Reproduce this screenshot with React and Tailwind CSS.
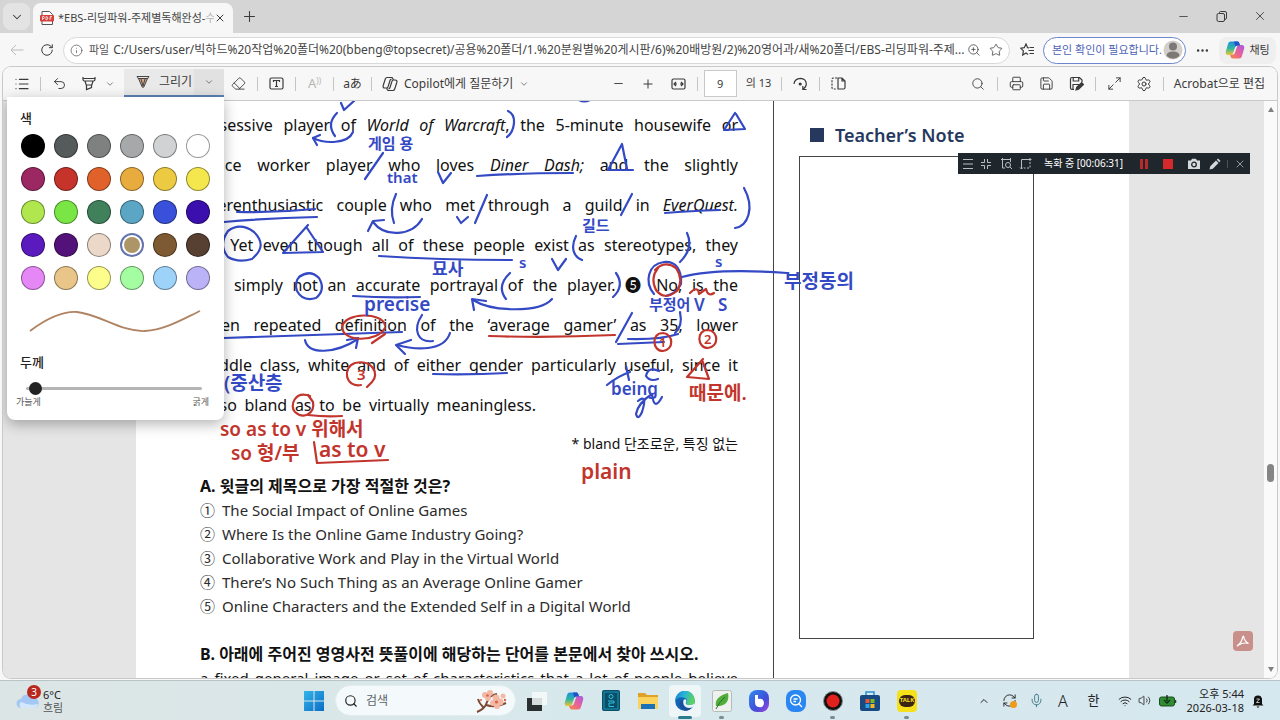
import { useState } from 'react';
import {
  ChevronDown, ChevronUp, Eraser, Info, List, Maximize2, Mic, Minus, MoreHorizontal, Plus, Printer,
  RefreshCw, RotateCw, Save, Search, Settings, Star, Undo2, Volume2, Wifi, X, ZoomIn,
} from 'lucide-react';

const colors = [
  ['검정', 'bg-[#000000]'], ['진한 회색', 'bg-[#555a5a]'], ['회색', 'bg-[#7f8181]'],
  ['중간 회색', 'bg-[#a6a8a9]'], ['연한 회색', 'bg-[#d0d2d3]'], ['흰색', 'bg-[#ffffff]'],
  ['자홍', 'bg-[#9b2763]'], ['빨강', 'bg-[#c5332a]'], ['주황', 'bg-[#e0622a]'],
  ['귤색', 'bg-[#e8ab3d]'], ['금색', 'bg-[#eccb43]'], ['노랑', 'bg-[#f4e64d]'],
  ['라임', 'bg-[#b0e64e]'], ['연두', 'bg-[#79e646]'], ['초록', 'bg-[#40805a]'],
  ['청록', 'bg-[#5ba6c4]'], ['파랑', 'bg-[#3850da]'], ['남색', 'bg-[#3b0fae]'],
  ['보라', 'bg-[#5a1abd]'], ['진보라', 'bg-[#531279]'], ['살구', 'bg-[#ecd8c8]'],
  ['황갈색', 'bg-[#ad9568]'], ['갈색', 'bg-[#7e5a32]'], ['진갈색', 'bg-[#573f32]'],
  ['분홍', 'bg-[#e687f6]'], ['복숭아', 'bg-[#eac589]'], ['연노랑', 'bg-[#fdfd8b]'],
  ['민트', 'bg-[#a5fda2]'], ['하늘', 'bg-[#9dd2f9]'], ['라벤더', 'bg-[#bbb3f7]'],
];

const passage = [
  <>obsessive player of <i>World of Warcraft</i>, the 5-minute housewife or</>,
  <>office worker player who loves <i>Diner Dash;</i> and the slightly</>,
  <>overenthusiastic couple who met through a guild in <i>EverQuest.</i></>,
  <>❹ Yet even though all of these people exist as stereotypes, they</>,
  <>are simply not an accurate portrayal of the player. ❺ No, is the</>,
  <>often repeated definition of the ‘average gamer’ as 35, lower</>,
  <>middle class, white and of either gender particularly useful, since it</>,
];

const choices = [
  ['①', 'The Social Impact of Online Games'],
  ['②', 'Where Is the Online Game Industry Going?'],
  ['③', 'Collaborative Work and Play in the Virtual World'],
  ['④', 'There’s No Such Thing as an Average Online Gamer'],
  ['⑤', 'Online Characters and the Extended Self in a Digital World'],
];

const blueInk = [
  'M341 103 L344 110 L354 101', 'M579 100 Q584 103 590 100',
  'M337 113 Q326 124 335 136', 'M353 132 C348 144 325 144 313 138', 'M320 135 L313 138 L317 145',
  'M383 153 L365 179', 'M438 172 L443 183 L451 173', 'M477 176 Q520 173 573 173',
  'M237 212 Q275 213 315 209', 'M224 222 Q270 218 317 217',
  'M396 194 Q389 209 394 223', 'M422 219 C412 236 385 238 373 222', 'M368 231 L373 221 L384 220',
  'M457 217 L461 223 L468 217', 'M487 195 L475 223',
  'M252 259 Q238 263 228 257 Q218 245 228 231 Q240 222 254 232 C264 242 262 250 253 258',
  'M308 225 L283 253 L323 252 L307 228', 'M379 256 Q440 260 512 260',
  'M299 277 Q310 269 319 278 Q326 290 316 298 Q303 302 297 291 Q294 282 300 276',
  'M353 296 Q385 298 420 297',
  'M508 111 C518 116 514 132 507 137', 'M735 113 L724 130 L745 129 L736 114',
  'M622 144 L608 170 L633 170 M622 144 L627 169', 'M632 194 L621 215', 'M665 213 Q690 211 720 210',
  'M744 188 C755 208 748 226 735 228', 'M576 236 C570 248 574 257 582 260', 'M687 233 Q694 248 680 262',
  'M552 259 L558 270 L566 259', 'M654 294 C644 282 648 264 664 262 C676 261 682 270 681 284 Q676 294 666 296',
  'M682 277 Q716 268 787 273', 'M510 273 Q496 286 506 299', 'M616 273 Q625 286 613 297',
  'M552 299 C540 313 492 312 473 300', 'M474 310 L472 299 L486 301',
  'M224 338 Q310 335 402 332', 'M305 340 C308 355 335 354 358 339', 'M347 340 L358 338 L356 348',
  'M422 315 C412 330 418 343 433 341', 'M450 333 C444 352 415 350 397 345', 'M411 340 L396 345 L405 354',
  'M632 313 L616 342', 'M628 339 Q660 340 678 334', 'M618 344 L664 342', 'M680 312 Q683 326 675 333',
  'M433 374 Q470 375 507 373', 'M626 366 L629 380 M607 385 Q618 376 630 372',
  'M659 371 Q648 366 646 376 Q650 382 658 379', 'M638 401 Q648 393 642 412 Q638 421 636 414 Q638 403 652 394 Q654 412 662 397',
];

const redInk = [
  'M655 270 Q665 260 676 268 Q684 280 677 291 Q664 301 656 290 Q650 278 658 268',
  'M690 293 Q698 285 699 294 L706 289 Q708 297 714 293',
  'M385 325 C382 312 345 312 342 327 C343 343 378 342 385 328 M372 343 L385 334',
  'M489 336 Q550 338 615 335', 'M361 385 C345 388 342 367 355 363 C372 359 380 374 372 382 L367 387',
  'M663 333 C651 333 652 351 663 351 C674 350 674 334 663 333',
  'M708 330 C696 330 697 348 708 348 C719 347 719 331 708 330',
  'M310 396 C295 390 289 406 295 412 C304 420 315 413 313 402 L308 395', 'M308 415 Q325 417 342 416',
  'M703 359 L687 377 L709 379 L702 360', 'M314 442 L317 463 L388 460',
];

const blueNotes = [
  [368, 149, 'text-[15px]', '게임 용'], [387, 183, 'text-[15px]', 'that'], [582, 231, 'text-[15px]', '길드'],
  [432, 275, 'text-[17px]', '묘사'], [519, 268, 'text-[15px]', 's'], [715, 267, 'text-[15px]', 's'],
  [784, 288, 'text-[19px]', '부정동의'], [364, 311, 'text-[19px]', 'precise'], [649, 310, 'text-[15px]', '부정어'],
  [694, 311, 'text-[17px]', 'V'], [718, 311, 'text-[17px]', 'S'], [224, 390, 'text-[19px]', '(중산층'],
  [611, 395, 'text-[17px]', 'being'],
];

const redNotes = [
  [220, 436, 'text-[19px]', 'so as to v 위해서'], [231, 460, 'text-[19px]', 'so 형/부'],
  [319, 457, 'text-[21px]', 'as to v'], [581, 479, 'text-[21px]', 'plain'], [689, 400, 'text-[19px]', '때문에.'],
  [659, 347, 'text-[13px]', '1'], [704, 344, 'text-[13px]', '2'], [357, 380, 'text-[15px]', '3'],
];

function Tool({ label, children }) {
  return (
    <button type="button" aria-label={label} className="flex h-7 w-[25px] shrink-0 items-center justify-center">
      {children}
    </button>
  );
}

function Divider() {
  return <span className="mx-1.5 h-3.5 w-px shrink-0 bg-[#c4c4c4]" />;
}

function CopilotLogo({ id }) {
  return (
    <svg viewBox="0 0 20 20" className="size-5 shrink-0">
      <defs>
        <linearGradient id={`${id}-a`} x1="0" y1="0" x2="0" y2="1">
          <stop offset="0" stopColor="#1f8fe0" /><stop offset=".5" stopColor="#2fb6a0" /><stop offset="1" stopColor="#f3c52f" />
        </linearGradient>
        <linearGradient id={`${id}-b`} x1="1" y1="0" x2="0" y2="1">
          <stop offset="0" stopColor="#a55be8" /><stop offset=".5" stopColor="#e9609a" /><stop offset="1" stopColor="#f58a3c" />
        </linearGradient>
      </defs>
      <path d="M6 1.5h6.2c1.2 0 1.8.7 2.1 1.7l.7 2.3h-2.4c-1.4 0-2.2.8-2.6 2.1L8 13.3c-.4 1.2-1.2 1.8-2.4 1.8H3.2C1 15.1.3 13.3.9 11.2L3 4C3.5 2.3 4.4 1.5 6 1.5z" fill={`url(#${id}-a)`} />
      <path d="M14 18.5H7.8c-1.2 0-1.8-.7-2.1-1.7L5 14.7h2.4c1.4 0 2.2-.8 2.6-2.1L12 6.7c.4-1.2 1.2-1.8 2.4-1.8h2.4c2.2 0 2.9 1.8 2.3 3.9L17 16c-.5 1.7-1.4 2.5-3 2.5z" fill={`url(#${id}-b)`} />
      <path d="M9 1.5h3.2c1.2 0 1.8.7 2.1 1.7l.7 2.3h-2.4c-1 0-1.7.4-2.2 1.2z" fill="#2450c8" />
    </svg>
  );
}

function TitleBar() {
  return (
    <header className="flex h-[33px] shrink-0 items-end bg-[#d5d5d5] pl-[3px]">
      <button type="button" aria-label="탭 작업 메뉴" className="mb-[3px] flex h-[27px] w-[27px] items-center justify-center rounded-lg bg-[#e3e3e3]">
        <ChevronDown size={14} strokeWidth={1.8} />
      </button>
      <div className="ml-[3px] flex h-[30px] w-[200px] items-center rounded-t-lg bg-[#f7f7f7] px-[7px]">
        <svg viewBox="0 0 14 14" className="size-3.5 shrink-0">
          <path d="M2 .5h7.5L12.5 3.5v10H2z" fill="#fff" stroke="#555" />
          <rect x="0" y="4" width="14" height="6.5" rx="1" fill="#d6403b" />
          <path d="M2.5 9V5.5H4q.8 1 0 2H2.5M6 5.5V9q3-.5 1.5-3L6 5.5M10 9V5.5h2M10 7h1.6" fill="none" stroke="#fff" strokeWidth=".7" />
        </svg>
        <span className="ml-1 w-[156px] shrink-0 overflow-hidden text-[11px] whitespace-nowrap text-[#444]">
          *EBS-리딩파워-주제별독해완성-<span className="text-[#b5b5b5]">수</span>
        </span>
        <button type="button" aria-label="탭 닫기" className="ml-auto"><X size={12} strokeWidth={2} /></button>
      </div>
      <button type="button" aria-label="새 탭" className="mb-2 ml-2"><Plus size={17} strokeWidth={1.5} /></button>
      <div className="mb-2.5 ml-auto flex items-center gap-[25px] pr-[13px]">
        <button type="button" aria-label="최소화"><Minus size={13} strokeWidth={1.5} /></button>
        <button type="button" aria-label="이전 크기로">
          <svg viewBox="0 0 13 13" className="size-[13px] fill-none stroke-current">
            <rect x="2" y="3.5" width="7.5" height="8" rx="1.5" /><path d="M4.5 3.5v-1q0-1 1-1H10q1.5 0 1.5 1.5v5q0 1-1.5 1.5" />
          </svg>
        </button>
        <button type="button" aria-label="닫기"><X size={14} strokeWidth={1.5} /></button>
      </div>
    </header>
  );
}

function AddressBar() {
  return (
    <div className="flex h-[34px] shrink-0 items-center bg-[#f7f7f7] pr-1 pl-2">
      <button type="button" aria-label="뒤로" className="flex w-[18px] justify-center text-[#bcbcbc]">
        <svg viewBox="0 0 14 12" className="w-3.5 fill-none stroke-current"><path d="M13.5 6H1M6 1L1 6l5 5" /></svg>
      </button>
      <button type="button" aria-label="새로 고침" className="ml-3 flex w-[18px] justify-center">
        <RotateCw size={14} strokeWidth={1.7} />
      </button>
      <div className="ml-[7px] flex h-[27px] min-w-0 flex-1 items-center rounded-full border border-[#d8d8d8] bg-white px-[6px]">
        <Info size={13} strokeWidth={1.5} className="shrink-0 text-[#666]" />
        <label htmlFor="url" className="ml-1.5 shrink-0 text-[11px] text-[#555]">파일</label>
        <input
          id="url" type="text" readOnly
          value="C:/Users/user/빅하드%20작업%20폴더%20(bbeng@topsecret)/공용%20폴더/1.%20분원별%20게시판/6)%20배방원/2)%20영어과/새%20폴더/EBS-리딩파워-주제..."
          className="ml-1 min-w-0 flex-1 bg-transparent text-[12px] text-[#444] outline-none"
        />
        <button type="button" aria-label="확대/축소" className="shrink-0"><ZoomIn size={14} strokeWidth={1.3} /></button>
        <button type="button" aria-label="즐겨찾기에 추가" className="ml-2 shrink-0"><Star size={14} strokeWidth={1.3} /></button>
      </div>
      <button type="button" aria-label="즐겨찾기" className="ml-2.5 shrink-0">
        <svg viewBox="0 0 15 14" className="w-[15px] fill-none stroke-current stroke-[1.2]">
          <path d="M9 5L7.6 4.7 6 1 4.3 4.7.7 5.2l2.7 2.7L2.7 12 6 10l2 1.5M9.5 4.5H14M8.5 7.5H14M9.5 10.5H14" />
        </svg>
      </button>
      <button type="button" className="ml-2 flex h-[27px] w-[143px] shrink-0 items-center justify-between rounded-full border border-[#6b86cc] bg-white pr-0.5 pl-2 text-[11px] whitespace-nowrap text-[#4b62b5]">
        본인 확인이 필요합니다.
        <svg viewBox="0 0 20 20" className="size-5 shrink-0">
          <circle cx="10" cy="10" r="9.5" fill="#d4cfcb" /><circle cx="10" cy="6.5" r="4" fill="#7c7876" /><path d="M3.5 16q0-4.5 6.5-4.5t6.5 4.5q-6.5 5.5-13 0" fill="#7c7876" />
        </svg>
      </button>
      <button type="button" aria-label="설정 및 기타" className="mx-[9px] shrink-0"><MoreHorizontal size={15} strokeWidth={2} /></button>
      <button type="button" className="flex h-[27px] w-[57px] shrink-0 items-center justify-center gap-1 rounded-lg bg-[#efefef] text-[11px] whitespace-nowrap">
        <CopilotLogo id="chat" />채팅
      </button>
    </div>
  );
}

function SavePenIcon() {
  return (
    <svg viewBox="0 0 15 15" className="w-[15px] fill-none stroke-current stroke-[1.2]">
      <path d="M5 13.3H3Q1.5 13.3 1.5 12V3Q1.5 1.5 3 1.5h7.5L13 4v2M4.2 1.5V5h5.5V1.5M4 13V8.5h6" />
      <path d="M7 14l.7-2.7 5-4.6 1.7 1.7-4.8 4.9z" fill="currentColor" />
    </svg>
  );
}

function ViewerToolbar() {
  return (
    <div className="flex h-[34px] shrink-0 items-center border-b border-[#c9c9c9] bg-[#f7f7f7] pr-3 pl-1.5">
      <Tool label="목차"><List size={16} strokeWidth={1.7} /></Tool>
      <Divider />
      <Tool label="실행 취소"><Undo2 size={15} strokeWidth={1.5} /></Tool>
      <div className="mr-[5px] ml-1 flex items-center">
        <Tool label="강조 표시">
          <svg viewBox="0 0 14 15" className="w-3.5 fill-none stroke-current stroke-[1.2]">
            <path d="M1 1v2.5q0 1.5 1.5 1.5h9Q13 5 13 3.5V1M3 5l1.2 4h5.6L11 5M4.5 9v4.5l5-2V9M1 2.5h12" />
          </svg>
        </Tool>
        <button type="button" aria-label="강조 색" className="w-[18px] pl-1"><ChevronDown size={10} strokeWidth={1.5} /></button>
      </div>
      <div className="mt-0.5 flex h-7 w-[100px] shrink-0 items-center self-start border-b-2 border-[#5b80b5] bg-[#e9e9e9] text-[12px] whitespace-nowrap">
        <button type="button" className="flex h-full flex-1 items-center gap-[9px] pl-3">
          <svg viewBox="0 0 14 14" className="w-3.5">
            <path d="M2.5 3.5h9L7.8 12q-.8 1-1.6 0z" fill="#d8a587" stroke="#444" />
            <path d="M1 1.5h12M1 1l1.5 3M13 1l-1.5 3M5 4l2 7 2-7" fill="none" stroke="#444" />
          </svg>
          그리기
        </button>
        <button type="button" aria-label="그리기 속성" className="flex h-full w-[30px] items-center justify-center bg-[#e1e1e1]"><ChevronDown size={10} strokeWidth={1.5} /></button>
      </div>
      <div className="ml-0.5 flex items-center">
        <Tool label="지우개"><Eraser size={15} strokeWidth={1.4} /></Tool>
        <Divider />
        <Tool label="텍스트 추가">
          <svg viewBox="0 0 15 13" className="w-[15px] fill-none stroke-current stroke-[1.2]"><rect x="1" y="1" width="13" height="11" rx="1.5" /><path d="M4.5 5V3.5h6V5M7.5 3.5v6M6 9.5h3" /></svg>
        </Tool>
        <Divider />
        <Tool label="소리내어 읽기">
          <span className="text-[13px] leading-none text-[#b5b5b5]">A<sup className="text-[8px]">))</sup></span>
        </Tool>
        <Divider />
        <Tool label="번역"><span className="text-[12px] leading-none whitespace-nowrap">aあ</span></Tool>
        <Divider />
        <button type="button" className="ml-1 flex items-center gap-1.5 text-[12px] whitespace-nowrap">
          <svg viewBox="0 0 16 16" className="w-4 fill-none stroke-current stroke-[1.2]">
            <path d="M5 1.5h4.5q1 0 1.3 1l.4 1.5M5 1.5Q3.8 1.5 3.3 3L1.2 9.5Q.6 12 2.8 12h1.7q1.2 0 1.5-1.2L8 4.5Q8.5 3 9.5 3.5M11 14.5H6.5q-1 0-1.3-1L4.8 12M11 14.5q1.2 0 1.7-1.5l2.1-6.5Q15.4 4 13.2 4h-1.7q-1.2 0-1.5 1.2l-2 6.3q-.5 1.5-1.5 1" />
          </svg>
          Copilot에게 질문하기
          <ChevronDown size={10} strokeWidth={1.5} />
        </button>
      </div>
      <div className="flex-2" />
      <div className="flex items-center">
        <Tool label="축소"><Minus size={13} strokeWidth={1.7} /></Tool>
        <span className="w-[5px]" />
        <Tool label="확대"><Plus size={14} strokeWidth={1.7} /></Tool>
        <span className="w-[5px]" />
        <Tool label="너비에 맞추기">
          <svg viewBox="0 0 15 12" className="w-[15px] fill-none stroke-current stroke-[1.2]"><rect x="1" y="1" width="13" height="10" rx="1.5" /><path d="M3.5 6H6M9 6h2.5M5 4L3 6l2 2M10 4l2 2-2 2" /></svg>
        </Tool>
        <Divider />
        <input aria-label="페이지" type="text" defaultValue="9" className="h-[27px] w-[33px] border border-[#c9c9c9] bg-white text-center text-[11px]" />
        <span className="mr-1 ml-[9px] text-[11px] whitespace-nowrap">의 13</span>
        <Divider />
        <Tool label="회전">
          <svg viewBox="0 0 15 14" className="w-[15px] fill-none stroke-current stroke-[1.2]"><path d="M1 7Q1.5 1.5 7.5 1.3 13 1.5 13.3 7q0 3-3 5M13.5 12.5H9.8V9" /><circle cx="7.2" cy="7" r="1" fill="currentColor" /></svg>
        </Tool>
        <Divider />
        <Tool label="페이지 보기">
          <svg viewBox="0 0 15 13" className="w-[15px] fill-none stroke-current stroke-[1.2]"><path d="M7 1h4l3 3v6.5q0 1.5-1.5 1.5H7zM11 1v3h3" /><path d="M6 1H2.5Q1 1 1 2.5v8Q1 12 2.5 12H6" strokeDasharray="2 1.2" /></svg>
        </Tool>
      </div>
      <div className="flex-3" />
      <div className="flex items-center">
        <Tool label="찾기"><Search size={14} strokeWidth={1.5} /></Tool>
        <Divider />
        <div className="flex gap-[5px]">
          <Tool label="인쇄"><Printer size={15} strokeWidth={1.5} /></Tool>
          <Tool label="저장"><Save size={15} strokeWidth={1.5} /></Tool>
          <Tool label="다른 이름으로 저장"><SavePenIcon /></Tool>
        </div>
        <Divider />
        <div className="flex gap-[5px]">
          <Tool label="전체 화면"><Maximize2 size={15} strokeWidth={1.5} /></Tool>
          <Tool label="설정"><Settings size={16} strokeWidth={1.5} /></Tool>
        </div>
        <Divider />
        <a href="#acrobat" className="ml-1 text-[12px] whitespace-nowrap">Acrobat으로 편집</a>
      </div>
    </div>
  );
}

function DrawPanel() {
  const [color, setColor] = useState('황갈색');
  const [width, setWidth] = useState(2);

  return (
    <section className="absolute -top-1 left-1 z-20 w-[217px] rounded-b-lg bg-white px-[13px] pt-3 pb-3 text-[#222] shadow-[0_4px_14px_rgba(0,0,0,0.3)]">
      <h2 className="text-[13px] leading-[18px] font-medium">색</h2>
      <div className="-mx-1 mt-[7px] grid grid-cols-6 justify-items-center gap-y-[9px]">
        {colors.map(([name, bg]) => (
          <input
            key={name} type="radio" name="ink" aria-label={name}
            checked={color === name} onChange={() => setColor(name)}
            className={`${bg} size-6 appearance-none rounded-full border border-black/40 checked:border-2 checked:border-[#6474ad] checked:bg-clip-content checked:p-0.5`}
          />
        ))}
      </div>
      <svg viewBox="0 0 172 24" className="mt-[19px] ml-[9px] h-6 w-[172px]">
        <path d="M1 22C17 10 32 2 48 3c22 2 44 20 68 19 20-1 38-12 55-20" fill="none" stroke="#b08463" strokeWidth="1.8" />
      </svg>
      <h2 className="mt-5 text-[13px] leading-[18px] font-medium">두께</h2>
      <input
        type="range" min="0" max="100" aria-label="두께"
        value={width} onChange={e => setWidth(Number(e.target.value))}
        className="mt-[9px] ml-1.5 block h-4 w-[176px] appearance-none bg-transparent [&::-webkit-slider-runnable-track]:h-[3px] [&::-webkit-slider-runnable-track]:rounded-full [&::-webkit-slider-runnable-track]:bg-[#b5b5b5] [&::-webkit-slider-thumb]:-mt-[5px] [&::-webkit-slider-thumb]:size-[13px] [&::-webkit-slider-thumb]:appearance-none [&::-webkit-slider-thumb]:rounded-full [&::-webkit-slider-thumb]:bg-[#222]"
      />
      <div className="-mx-1 flex justify-between text-[9px] leading-3 text-[#555]">
        <span>가늘게</span>
        <span className="mr-1.5">굵게</span>
      </div>
    </section>
  );
}

function InkLayer() {
  return (
    <svg viewBox="136 101 993 577" className="pointer-events-none absolute top-0 left-0 h-[577px] w-[993px] font-semibold">
      <g fill="none" strokeWidth="2.2" strokeLinecap="round" strokeLinejoin="round">
        <g stroke="#3449c4">{blueInk.map(d => <path key={d} d={d} />)}</g>
        <g stroke="#c2352d">{redInk.map(d => <path key={d} d={d} />)}</g>
      </g>
      <g className="fill-[#3449c4]">
        {blueNotes.map(([x, y, size, text]) => <text key={x} x={x} y={y} className={size}>{text}</text>)}
      </g>
      <g className="fill-[#c2352d]">
        {redNotes.map(([x, y, size, text]) => <text key={x} x={x} y={y} className={size}>{text}</text>)}
      </g>
    </svg>
  );
}

function RecorderBar() {
  return (
    <div className="absolute top-[52px] right-[27px] z-10 flex h-[21px] w-[292px] items-center bg-[#1f272d] px-1 text-[#b9bec2]">
      <div className="flex items-center gap-1.5">
        <button type="button" aria-label="메뉴"><svg viewBox="0 0 12 12" className="size-3 stroke-current"><path d="M1 1.5h10M1 6h10M1 10.5h10" /></svg></button>
        <button type="button" aria-label="축소"><svg viewBox="0 0 12 12" className="size-3 fill-none stroke-current"><path d="M4.5 1v3.5H1M7.5 1v3.5H11M4.5 11V7.5H1M7.5 11V7.5H11" /></svg></button>
        <button type="button" aria-label="영역 검색" className="ml-0.5"><svg viewBox="0 0 13 13" className="size-[13px] fill-none stroke-current"><path d="M1 2.5h9M2.5 1v10H5M10.5 1v4" /><circle cx="8" cy="8" r="2.5" /><path d="M10 10l2 2" /></svg></button>
        <button type="button" aria-label="영역 선택"><svg viewBox="0 0 13 13" className="size-[13px] fill-none stroke-current"><path d="M2.5 12V2.5H12M10.5 1L12 2.5 10.5 4M1 10.5L2.5 12 4 10.5" /><path d="M11 5v6H5" strokeDasharray="2 1.5" /></svg></button>
      </div>
      <span className="ml-3 text-[10px] whitespace-nowrap text-white">녹화 중 [00:06:31]</span>
      <div className="ml-auto flex items-center">
        <button type="button" aria-label="일시 정지" className="flex gap-0.5"><span className="h-2.5 w-[3px] bg-[#b52b2d]" /><span className="h-2.5 w-[3px] bg-[#b52b2d]" /></button>
        <button type="button" aria-label="중지" className="ml-[15px] size-2.5 bg-[#d5292b]" />
        <button type="button" aria-label="캡처" className="ml-3.5">
          <svg viewBox="0 0 14 12" className="w-3.5"><path d="M1 2.5h3L5 .8h4l1 1.7h3V11H1z" fill="#d6d9db" /><circle cx="7" cy="6.5" r="2.3" fill="#d6d9db" stroke="#1f272d" strokeWidth="1.3" /></svg>
        </button>
        <button type="button" aria-label="펜" className="ml-2 text-[#d6d9db]">
          <svg viewBox="0 0 12 12" className="size-3 fill-current"><path d="M.5 11.5l.8-3.3L7 2.5 9.5 5 3.8 10.7zM7.8 1.7L9 .5 11.5 3l-1.2 1.2z" /></svg>
        </button>
        <span className="mx-1.5 h-2 w-px bg-[#4b5257]" />
        <button type="button" aria-label="닫기"><X size={12} strokeWidth={1.5} /></button>
      </div>
    </div>
  );
}

function DocumentView() {
  return (
    <main className="relative min-h-0 flex-1 bg-[#e5e5e5]">
      <div className="flex h-full justify-center overflow-hidden pr-[15px]">
        <article className="relative flex h-full w-[993px] shrink-0 overflow-hidden bg-white text-[16px] text-[#111]">
          <div className="h-[700px] w-[638px] shrink-0 border-r border-[#444] pt-1 pr-[35px] pl-16">
            {passage.map((line, i) => (
              <p key={i} className="leading-10 whitespace-nowrap [text-align-last:justify]">{line}</p>
            ))}
            <p className="w-[336px] leading-10 whitespace-nowrap [text-align-last:justify]">is so bland as to be virtually meaningless.</p>
            <p className="mt-[7px] text-right text-[14px] leading-6">* bland 단조로운, 특징 없는</p>
            <h3 className="mt-[18px] text-[16px] leading-6 font-bold">A. 윗글의 제목으로 가장 적절한 것은?</h3>
            <ol className="text-[15px] leading-6 text-[#2b2b2b]">
              {choices.map(([mark, text]) => (
                <li key={mark} className="flex gap-[7px]"><span>{mark}</span>{text}</li>
              ))}
            </ol>
            <h3 className="mt-6 text-[16px] leading-6 font-bold whitespace-nowrap">B. 아래에 주어진 영영사전 뜻풀이에 해당하는 단어를 본문에서 찾아 쓰시오.</h3>
            <p className="text-[15px] leading-6 whitespace-nowrap [text-align-last:justify]">a fixed general image or set of characteristics that a lot of people believe</p>
          </div>
          <aside className="pt-[22px] pl-[25px]">
            <h2 className="flex h-6 items-center gap-[11px] pl-[11px] text-[18px] font-semibold text-[#26385e]">
              <span className="size-3.5 bg-[#26385e]" />
              Teacher’s Note
            </h2>
            <div className="mt-[9px] h-[483px] w-[235px] border border-[#444]" />
          </aside>
          <InkLayer />
        </article>
      </div>
      <DrawPanel />
      <RecorderBar />
      <button type="button" aria-label="Acrobat" className="absolute right-6 bottom-[27px] flex size-5 items-center justify-center rounded-sm bg-[#c98f8a]">
        <svg viewBox="0 0 14 14" className="size-3.5 fill-none stroke-white stroke-[1.2]"><path d="M1.5 11.5Q5.5 9 6.8 3q.3-2 1 0 .5 4 4.7 6.5-5-1.5-10 1.5-1.5 1.5-1 .5z" /></svg>
      </button>
      <div className="absolute inset-y-0 right-0 flex w-[13px] flex-col items-center justify-between bg-[#fafafa] py-1.5 text-[#808080]">
        <svg viewBox="0 0 6 5" className="w-1.5 fill-current"><path d="M3 0l3 5H0z" /></svg>
        <span className="mt-[166px] h-[18px] w-[7px] rounded-full bg-[#858585]" />
        <svg viewBox="0 0 6 5" className="w-1.5 fill-current"><path d="M3 5l3-5H0z" /></svg>
      </div>
    </main>
  );
}

function TaskButton({ label, dot, active, children }) {
  return (
    <button
      type="button" aria-label={label}
      className={`relative flex h-8 w-8 shrink-0 items-center justify-center rounded ${active ? 'bg-white/60' : ''}`}
    >
      {children}
      {dot && <span className={`absolute -bottom-0.5 h-[3px] rounded-full ${active ? 'w-3.5 bg-[#2b7c8c]' : 'w-[5px] bg-[#7d8b92]'}`} />}
    </button>
  );
}

function Taskbar() {
  return (
    <footer className="flex h-10 shrink-0 items-center border-t border-[#b9c4c8] bg-linear-to-r from-[#dce5e5] via-[#d7e9ed] to-[#d6e8ef] text-[#222]">
      <button type="button" className="ml-4 flex shrink-0 items-center gap-1 text-left text-[11px] leading-[13px] whitespace-nowrap">
        <span className="relative">
          <svg viewBox="0 0 23 23" className="size-[23px]"><path d="M5 19a4.5 4.5 0 010-9 6.5 6.5 0 0112-1 5 5 0 011.5 10z" fill="#a4c8f3" /><path d="M5 19a4 4 0 010-6q8 4 17 2-.5 3.5-4 4z" fill="#d4e6fb" /></svg>
          <span className="absolute -top-1 -right-0.5 flex size-[14px] items-center justify-center rounded-full bg-[#b8281f] text-[10px] text-white">3</span>
        </span>
        <span>6°C<br /><span className="text-[#555]">흐림</span></span>
      </button>
      <div className="flex-5" />
      <div className="flex shrink-0 items-center gap-[5px]">
        <TaskButton label="시작">
          <svg viewBox="0 0 20 20" className="size-5"><defs><linearGradient id="win" x1="0" y1="0" x2="1" y2="1"><stop stopColor="#35b5ea" /><stop offset="1" stopColor="#0a6cc4" /></linearGradient></defs><path d="M0 0h9.5v9.5H0zM10.5 0H20v9.5h-9.5zM0 10.5h9.5V20H0zM10.5 10.5H20V20h-9.5z" fill="url(#win)" /></svg>
        </TaskButton>
        <div className="flex h-[31px] w-[181px] items-center rounded-full border border-[#e3ecef] bg-[#f4fafb] pr-1.5 pl-2">
          <Search size={14} strokeWidth={2} className="shrink-0" />
          <input type="search" aria-label="검색" placeholder="검색" className="ml-2 min-w-0 flex-1 bg-transparent text-[12px] outline-none placeholder:text-[#5d6367]" />
          <svg viewBox="0 0 34 26" className="w-[34px] shrink-0">
            <path d="M2 24Q10 21 12 14T22 6M8 19Q4 15 3 11M11 17q10 3 20-2" fill="none" stroke="#7d4a35" strokeWidth="2" />
            <g fill="#f3b9a4"><circle cx="10" cy="7" r="3" /><circle cx="15" cy="5" r="3" /><circle cx="13" cy="10" r="3" /><circle cx="21" cy="10" r="3.5" /><circle cx="18" cy="15" r="3" /><circle cx="25" cy="14" r="3.5" /><circle cx="28" cy="8" r="2.5" /><circle cx="22" cy="18" r="3" /></g>
            <g fill="#d9644a"><circle cx="12.5" cy="7.5" r="1.3" /><circle cx="21.5" cy="14" r="1.6" /><circle cx="30" cy="12" r="1.2" /><circle cx="6" cy="12" r="1" /></g>
          </svg>
        </div>
        <TaskButton label="작업 보기">
          <svg viewBox="0 0 20 20" className="size-5"><path d="M0 7h15v13H0z" fill="#2c2f31" /><path d="M5 1h15v13H5z" fill="#f7f9fa" fillOpacity=".85" /></svg>
        </TaskButton>
        <TaskButton label="Copilot"><CopilotLogo id="task" /></TaskButton>
        <TaskButton label="편집기">
          <svg viewBox="0 0 18 21" className="h-[21px]"><rect width="18" height="21" rx="2" fill="#0c4d68" /><rect x="2" y="2" width="14" height="17" fill="none" stroke="#1695b5" /><circle cx="9" cy="6.5" r="2" fill="none" stroke="#2bc4df" /><path d="M6 11h6v2H7v3.5h5" fill="none" stroke="#2bc4df" /></svg>
        </TaskButton>
        <TaskButton label="파일 탐색기">
          <svg viewBox="0 0 20 20" className="size-5"><path d="M0 2h7l2 2h11v13H0z" fill="#e0a128" /><path d="M0 6h20v12H0z" fill="#fbd35f" /><path d="M3 13h14v5H3z" fill="#1b72b8" /></svg>
        </TaskButton>
        <TaskButton label="Edge" dot active>
          <svg viewBox="0 0 20 20" className="size-5">
            <defs><linearGradient id="edge" x1="0" y1="0" x2="1" y2=".3"><stop stopColor="#1b7fd0" /><stop offset=".5" stopColor="#27b4dc" /><stop offset="1" stopColor="#5bd35f" /></linearGradient></defs>
            <circle cx="10" cy="10" r="9.8" fill="#1464b4" />
            <path d="M.2 10A9.8 9.8 0 0119.8 9q.3 5-5.3 5-3 0-3.5-1.5 2-2 .5-4.5Q9 5.5 4.5 6.5 1 7.5.2 10z" fill="url(#edge)" />
            <path d="M7.5 11q0 6 7 5.5 2 0 3.5-1.5-3 5-8 4.8Q3 17 5 11.5q.8-2.5 3-3-1 1-.5 2.5z" fill="#1b4f9a" />
            <path d="M8.5 9q2-1.5 3 .5 0 1.5-.8 3 .8 1.8 4 1.6 2.5 0 4.3-1.6.5 2-1 3.5-3 1.5-6.5.5-4-2-3-7.5z" fill="#e8f4f8" />
          </svg>
        </TaskButton>
        <TaskButton label="메모" dot>
          <svg viewBox="0 0 20 22" className="h-[22px]"><rect x=".5" y=".5" width="19" height="21" rx="2" fill="#eef1ee" stroke="#b5bcb8" /><path d="M4 16Q2 7 16 3q2 11-8 13z" fill="#4fae3a" /><path d="M4 19Q7 12 13 7" fill="none" stroke="#28702a" /></svg>
        </TaskButton>
        <TaskButton label="브라우저">
          <svg viewBox="0 0 20 22" className="h-[22px]"><defs><linearGradient id="bb" x1="0" y1="0" x2="1" y2="1"><stop stopColor="#2f8af0" /><stop offset=".6" stopColor="#3f4ed8" /><stop offset="1" stopColor="#a845dd" /></linearGradient></defs><rect width="20" height="22" rx="8" fill="url(#bb)" /><path d="M6 5h3v4q6-1 6 4t-5.5 4Q6 16.5 6 12z" fill="#fff" /></svg>
        </TaskButton>
        <TaskButton label="돋보기">
          <svg viewBox="0 0 20 22" className="h-[22px]"><rect width="20" height="22" rx="8" fill="#2a86f2" /><circle cx="9.5" cy="10" r="5" fill="none" stroke="#fff" strokeWidth="1.3" /><path d="M13 14l3 3M7.5 9h4M7.5 11.5h2.5" fill="none" stroke="#fff" strokeWidth="1.3" /></svg>
        </TaskButton>
        <TaskButton label="녹화" dot>
          <svg viewBox="0 0 20 22" className="h-[22px]"><circle cx="10" cy="11" r="9.5" fill="#111" stroke="#8a8f92" /><circle cx="10" cy="11" r="6.5" fill="#e3211c" /></svg>
        </TaskButton>
        <TaskButton label="스토어">
          <svg viewBox="0 0 20 22" className="h-[22px]"><path d="M6 5V2h8v3" fill="none" stroke="#2c8fd0" strokeWidth="1.5" /><rect y="5" width="20" height="16" rx="2" fill="#174a82" /><path d="M5.5 9h4v4h-4z" fill="#e8573b" /><path d="M10.5 9h4v4h-4z" fill="#79b928" /><path d="M5.5 14h4v4h-4z" fill="#2ea3e3" /><path d="M10.5 14h4v4h-4z" fill="#f6b91a" /></svg>
        </TaskButton>
        <TaskButton label="카카오톡" dot>
          <span className="flex h-[22px] w-5 items-center justify-center rounded bg-[#f6df1b]">
            <span className="flex h-3 w-4 items-center justify-center rounded-full bg-[#3a2413] text-[6px] font-bold text-[#f6df1b]">TALK</span>
          </span>
        </TaskButton>
      </div>
      <div className="flex-1" />
      <div className="ml-2 flex shrink-0 items-center pr-4">
        <button type="button" aria-label="숨겨진 아이콘"><ChevronUp size={12} strokeWidth={2} /></button>
        <button type="button" aria-label="업데이트" className="relative ml-3">
          <RefreshCw size={15} strokeWidth={1.5} />
          <span className="absolute right-0 bottom-0 size-[7px] rounded-full bg-[#f09a1c]" />
        </button>
        <button type="button" aria-label="마이크" className="ml-3 text-[#3f7789]"><Mic size={15} strokeWidth={1.5} /></button>
        <button type="button" className="ml-3.5 text-[16px] font-light">A</button>
        <button type="button" className="ml-5 text-[13px]">한</button>
        <button type="button" aria-label="네트워크" className="ml-[18px]"><Wifi size={14} strokeWidth={1.7} /></button>
        <button type="button" aria-label="볼륨" className="ml-1.5"><Volume2 size={13} strokeWidth={1.5} /></button>
        <button type="button" aria-label="배터리" className="ml-2">
          <svg viewBox="0 0 18 12" className="w-[18px]"><rect x=".5" y="2" width="15" height="9" rx="2" fill="#2f8b34" stroke="#1c4d20" /><path d="M16.5 5v3" stroke="#1c4d20" strokeWidth="1.5" /><path d="M5 5l3 3 3-3M8 0v6" fill="none" stroke="#102b12" strokeWidth="1.3" /></svg>
        </button>
        <div className="ml-2.5 text-right text-[11px] leading-[14px] whitespace-nowrap">오후 5:44<br />2026-03-18</div>
        <button type="button" aria-label="알림" className="ml-2">
          <svg viewBox="0 0 12 14" className="w-3"><path d="M2 10V5q0-3.5 4-3.5T10 5v5l1.5 1.5H.5zM4.5 12.5h3L6 14z" fill="#111" /><path d="M4.5 5h3l-3 3.5h3M9 .5h2.5L9 3h2.5" fill="none" stroke="#dce9ee" strokeWidth=".8" /></svg>
        </button>
      </div>
    </footer>
  );
}

export default function App() {
  return (
    <div className="flex h-screen flex-col overflow-hidden bg-[#f7f7f7] font-['Noto_Sans','Noto_Sans_CJK_KR',sans-serif] text-[#3a3a3a]">
      <TitleBar />
      <AddressBar />
      <div className="mx-[3px] mb-0.5 flex min-h-0 flex-1 flex-col overflow-hidden rounded-lg shadow-[0_0_0_1px_#c9c9c9]">
        <ViewerToolbar />
        <DocumentView />
      </div>
      <Taskbar />
    </div>
  );
}
